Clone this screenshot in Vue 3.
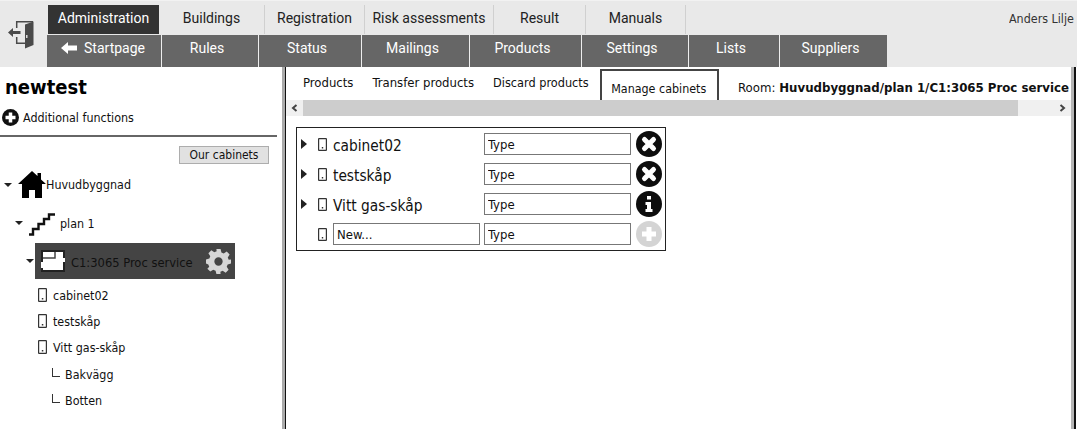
<script setup>
const top = [
  { t: 'Administration', w: 111, on: true },
  { t: 'Buildings', w: 106 },
  { t: 'Registration', w: 100 },
  { t: 'Risk assessments', w: 129 },
  { t: 'Result', w: 92 },
  { t: 'Manuals', w: 100 }
]
const sub = [
  { t: 'Rules', w: 97 },
  { t: 'Status', w: 103 },
  { t: 'Mailings', w: 108 },
  { t: 'Products', w: 112 },
  { t: 'Settings', w: 107 },
  { t: 'Lists', w: 91 },
  { t: 'Suppliers', w: 107 }
]
const tabs = ['Products', 'Transfer products', 'Discard products']
const rows = [
  { n: 'cabinet02', icon: 'x' },
  { n: 'testskåp', icon: 'x' },
  { n: 'Vitt gas-skåp', icon: 'i' }
]
const leaves = ['cabinet02', 'testskåp', 'Vitt gas-skåp']
const subs = ['Bakvägg', 'Botten']
</script>

<template>
  <div class="page">
    <header class="head">
      <svg class="exit" width="26" height="28" viewBox="0 0 26 28">
        <path fill="none" stroke="#4a4a4a" stroke-width="1.500" d="M8.700 7V.8H25M8.700 16v6.200H17" />
        <path fill="#4a4a4a" d="M17 3.500L25.500.5v23.500L17 27.500z" />
        <rect x="18" y="14" width="1.500" height="3" fill="#ddd" />
        <path fill="#4a4a4a" d="M0 11.500l5-4.500v3h7.500v3H5v3z" />
      </svg>
      <div class="navs">
        <nav class="row1">
          <a v-for="i in top" :key="i.t" class="t1" :class="{ on: i.on }" :style="{ width: i.w + 'px' }">{{ i.t }}</a>
        </nav>
        <nav class="row2">
          <a class="t2 first">
            <svg width="16" height="12" viewBox="0 0 16 12"><path fill="#fff" d="M0 6l7-6v3.500h9v5H7V12z" /></svg>
            Startpage
          </a>
          <a v-for="i in sub" :key="i.t" class="t2" :style="{ width: i.w + 'px' }">{{ i.t }}</a>
        </nav>
      </div>
      <div class="user">Anders Lilje</div>
    </header>

    <div class="body">
      <aside class="side">
        <h1 class="title">newtest</h1>
        <div class="more">
          <svg width="17" height="17" viewBox="0 0 17 17">
            <circle cx="8.500" cy="8.500" r="8.500" fill="#111" />
            <path stroke="#fff" stroke-width="3.500" d="M8.500 3.500v10M3.500 8.500h10" />
          </svg>
          <span>Additional functions</span>
        </div>
        <div class="ours"><button class="oursbtn">Our cabinets</button></div>
        <ul class="tree">
          <li class="node n0">
            <i class="down"></i>
            <svg class="house" width="28" height="27" viewBox="0 0 28 27">
              <path fill="#000" d="M14 0l5.500 5V2h3.500v6.500L28 13h-4v14h-7v-8h-6v8H4V13H0z" />
            </svg>
            <span>Huvudbyggnad</span>
          </li>
          <li class="node n1">
            <i class="down"></i>
            <svg class="stairs" width="28" height="24" viewBox="0 0 28 24">
              <path fill="none" stroke="#111" stroke-width="2.400" d="M1 22.500h4v-5.500h5.500v-5H16V7h5V2.500h6" />
            </svg>
            <span>plan 1</span>
          </li>
          <li class="node n2">
            <i class="down"></i>
            <div class="room">
              <svg class="plan" width="24" height="22" viewBox="0 0 24 22">
                <rect x="1" y="1" width="22" height="20" fill="#fff" stroke="#222" stroke-width="2" />
                <path fill="none" stroke="#444" stroke-width="1.500" d="M2 8h12V2" />
                <path fill="#fff" d="M0 12h3v6H0zM21 8h3v4h-3z" />
              </svg>
              <span class="roomname">C1:3065 Proc service</span>
              <svg class="gear" width="25" height="25" viewBox="0 0 24 24">
                <path fill="#d6d6d6" fill-rule="evenodd" d="M10 0h4l.8 3.300 2.200.9 2.900-1.800 2.800 2.800-1.800 2.900.9 2.200L24 10v4l-3.200.8-.9 2.200 1.800 2.900-2.800 2.800-2.900-1.800-2.200.9L14 24h-4l-.8-3.200-2.200-.9-2.900 1.800-2.800-2.800L3.100 17l-.9-2.200L0 14v-4l3.200-.8.900-2.200-1.800-2.900 2.800-2.800L8 3.100l2.200-.9zM12 8a4 4 0 1 0 0 8 4 4 0 0 0 0-8z" />
              </svg>
            </div>
          </li>
          <li v-for="l in leaves" :key="l" class="leaf">
            <svg class="cab" width="9" height="14" viewBox="0 0 9 14">
              <rect x=".6" y=".6" width="7.800" height="12.800" rx=".5" fill="none" stroke="#333" stroke-width="1.200" />
              <rect x="3.800" y="10" width="1.500" height="1.500" fill="#333" />
            </svg>
            <span>{{ l }}</span>
          </li>
          <li v-for="s in subs" :key="s" class="shelf">
            <i class="elbow"></i>
            <span>{{ s }}</span>
          </li>
        </ul>
      </aside>

      <div class="split"></div>

      <main class="main">
        <div class="tabs">
          <a v-for="t in tabs" :key="t" class="tab">{{ t }}</a>
          <a class="tab active">Manage cabinets</a>
          <div class="roomline">Room: <b>Huvudbyggnad/plan 1/C1:3065 Proc service</b></div>
        </div>
        <div class="scroll">
          <span class="arrow">
            <svg width="7" height="8" viewBox="0 0 7 8"><path fill="none" stroke="#444" stroke-width="2" d="M5.500 1L2 4l3.500 3" /></svg>
          </span>
          <div class="thumb"></div>
          <span class="arrow right">
            <svg width="7" height="8" viewBox="0 0 7 8"><path fill="none" stroke="#444" stroke-width="2" d="M1.500 1L5 4 1.500 7" /></svg>
          </span>
        </div>
        <div class="panel">
          <div v-for="r in rows" :key="r.n" class="prow">
            <i class="tri"></i>
            <svg class="cab small" width="9" height="13" viewBox="0 0 9 13">
              <rect x=".6" y=".6" width="7.800" height="11.800" rx=".5" fill="none" stroke="#333" stroke-width="1.200" />
              <rect x="3.800" y="9" width="1.400" height="1.500" fill="#333" />
            </svg>
            <span class="pname">{{ r.n }}</span>
            <input class="inp" value="Type" />
            <svg v-if="r.icon === 'x'" class="act" width="26" height="26" viewBox="0 0 26 26">
              <circle cx="13" cy="13" r="13" fill="#0d0d0d" />
              <path stroke="#fff" stroke-width="5" stroke-linecap="round" d="M8.500 8.500l9 9M17.500 8.500l-9 9" />
            </svg>
            <svg v-else class="act" width="26" height="26" viewBox="0 0 26 26">
              <circle cx="13" cy="13" r="13" fill="#0d0d0d" />
              <path fill="#fff" d="M11 5h4v3.500h-4zM9.500 11H15v7h1.500v3h-7v-3H11v-4H9.500z" />
            </svg>
          </div>
          <div class="prow">
            <i class="tri none"></i>
            <svg class="cab small" width="9" height="13" viewBox="0 0 9 13">
              <rect x=".6" y=".6" width="7.800" height="11.800" rx=".5" fill="none" stroke="#333" stroke-width="1.200" />
              <rect x="3.800" y="9" width="1.400" height="1.500" fill="#333" />
            </svg>
            <input class="inp new" value="New..." />
            <input class="inp" value="Type" />
            <svg class="act" width="26" height="26" viewBox="0 0 26 26">
              <circle cx="13" cy="13" r="13" fill="#d4d4d4" />
              <path stroke="#fff" stroke-width="5" d="M13 6v14M6 13h14" />
            </svg>
          </div>
        </div>
      </main>
      <div class="split-right"></div>
    </div>
  </div>
</template>

<style>
html, body { margin: 0; background: #fff; }
</style>

<style scoped>
.page {
  width: 1077px;
  height: 429px;
  overflow: hidden;
  font-family: "DejaVu Sans Condensed", "Noto Sans", sans-serif;
  font-size: 12.4px;
  color: #111;
  display: flex;
  flex-direction: column;
}
.head {
  height: 67px;
  flex: none;
  background: #e9e9e9;
  display: flex;
  font-family: Roboto, sans-serif;
  font-size: 14px;
  box-sizing: border-box;
  border-top: 1px solid #f2f2f2;
}
.exit { margin: 20px 0 0 8px; flex: none; }
.navs { margin-left: 13px; width: 840px; flex: none; }
.row1 { display: flex; height: 29px; margin: 4px 0 1px 1px; }
.t1 {
  box-sizing: border-box;
  display: flex;
  align-items: center;
  justify-content: center;
  color: #222;
  border-right: 1px solid #d0d0d0;
  padding-bottom: 4px;
}
.t1.on { background: #333; color: #fff; border-right: 0; }
.row2 { display: flex; height: 32px; }
.t2 {
  box-sizing: border-box;
  background: #666;
  color: #fff;
  display: flex;
  align-items: center;
  justify-content: center;
  gap: 7px;
  border-right: 1px solid #eee;
  padding: 0 6px 7px 0;
}
.t2.first { width: 115px; padding-right: 2px; }
.t2:last-child { border-right: 0; }
.user {
  position: absolute;
  right: 0;
  top: 11px;
  width: 68px;
  white-space: nowrap;
  overflow: hidden;
  font-family: "DejaVu Sans Condensed", sans-serif;
  font-size: 12.4px;
  color: #333;
}
.body { flex: 1; display: flex; min-height: 0; }
.side { width: 282px; flex: none; box-sizing: border-box; }
.title { margin: 8px 0 0 5px; font: 700 20px/24px "DejaVu Sans Condensed", sans-serif; color: #000; }
.more {
  display: flex;
  align-items: center;
  gap: 4px;
  margin: 10px 0 0 2px;
  height: 17px;
}
.ours {
  border-top: 2px solid #666;
  margin: 9px 5px 0 0;
  padding-top: 9px;
  display: flex;
  justify-content: flex-end;
  padding-right: 8px;
}
.oursbtn {
  width: 90px;
  height: 18px;
  padding: 0;
  background: #e1e1e1;
  border: 1px solid #adadad;
  font: 12px "DejaVu Sans Condensed", sans-serif;
  color: #111;
}
.tree { list-style: none; margin: 0; padding: 0; }
.node { display: flex; align-items: center; }
.down {
  width: 0;
  height: 0;
  border: 4px solid transparent;
  border-top: 4px solid #222;
  border-bottom: 0;
  flex: none;
}
.n0 { height: 27px; margin-top: 7px; padding-left: 4px; }
.house { margin-left: 6px; flex: none; }
.n1 { height: 24px; margin-top: 13px; padding-left: 15px; }
.stairs { margin: 2px 4px 0 5px; flex: none; }
.n2 { height: 36px; margin: 8px 0 3px; padding-left: 26px; }
.room {
  margin-left: 1px;
  width: 200px;
  height: 36px;
  background: #444;
  display: flex;
  align-items: center;
  color: #111;
  position: relative;
  box-sizing: border-box;
  padding-left: 6px;
}
.roomname { font-size: 12.800px; padding-top: 2px; }
.plan { flex: none; margin-right: 6px; }
.gear { position: absolute; right: 4px; top: 6px; }
.leaf { display: flex; align-items: center; height: 26px; padding-left: 38px; gap: 6px; }
.shelf { display: flex; align-items: center; height: 26.500px; padding-left: 52px; gap: 5px; }
.leaf + .shelf { margin-top: 1px; }
.elbow {
  width: 7px;
  height: 8px;
  border-left: 1px solid #333;
  border-bottom: 1px solid #333;
  margin-top: -4px;
  flex: none;
}
.split {
  width: 4px;
  flex: none;
  background: #aaa;
  border-right: 1px solid #111;
  box-sizing: border-box;
}
.split-right {
  width: 6px;
  flex: none;
  background: #111;
  border-left: 3px solid #b5b5b5;
  border-right: 1px solid #fff;
  box-sizing: border-box;
}
.main { flex: 1; min-width: 0; font-size: 13px; }
.tabs { height: 33px; display: flex; align-items: flex-end; position: relative; }
.tab {
  display: flex;
  align-items: center;
  height: 31px;
  padding: 0 9.500px 5px;
  box-sizing: border-box;
  white-space: nowrap;
}
.tab:first-child { padding-left: 17px; }
.tab:nth-child(3) { font-size: 12.600px; }
.tab.active {
  margin-left: 2px;
  border: 2px solid #444;
  border-bottom: 0;
  padding: 5px 0 0 9px;
  width: 119px;
  font-size: 12.400px;
}
.roomline { position: absolute; left: 452px; top: 13px; white-space: nowrap; font-size: 13.100px; }
.scroll { height: 16px; background: #f0f0f0; display: flex; align-items: center; }
.arrow { width: 17px; height: 15px; display: flex; align-items: center; justify-content: center; flex: none; }
.thumb { width: 715px; height: 16px; background: #cdcdcd; }
.arrow.right { margin-left: auto; }
.panel {
  margin: 11px 0 0 10px;
  width: 370px;
  height: 124px;
  border: 1px solid #222;
  box-sizing: border-box;
  padding: 1px 0 0 4px;
}
.prow { display: flex; align-items: center; height: 30px; }
.tri {
  width: 0;
  height: 0;
  border: 5px solid transparent;
  border-left: 6px solid #222;
  border-right: 0;
  margin-right: 11px;
  flex: none;
}
.tri.none { border-color: transparent; }
.small { margin-right: 6px; flex: none; }
.pname { width: 151px; font-size: 15.300px; color: #111; padding-top: 4px; }
.inp {
  box-sizing: border-box;
  width: 147px;
  height: 22px;
  border: 1px solid #777;
  font: inherit;
  padding: 0 3px;
  color: #111;
  margin-right: 5px;
  background: #fff;
}
.inp.new { margin-right: 4px; }
.act { flex: none; }
</style>
